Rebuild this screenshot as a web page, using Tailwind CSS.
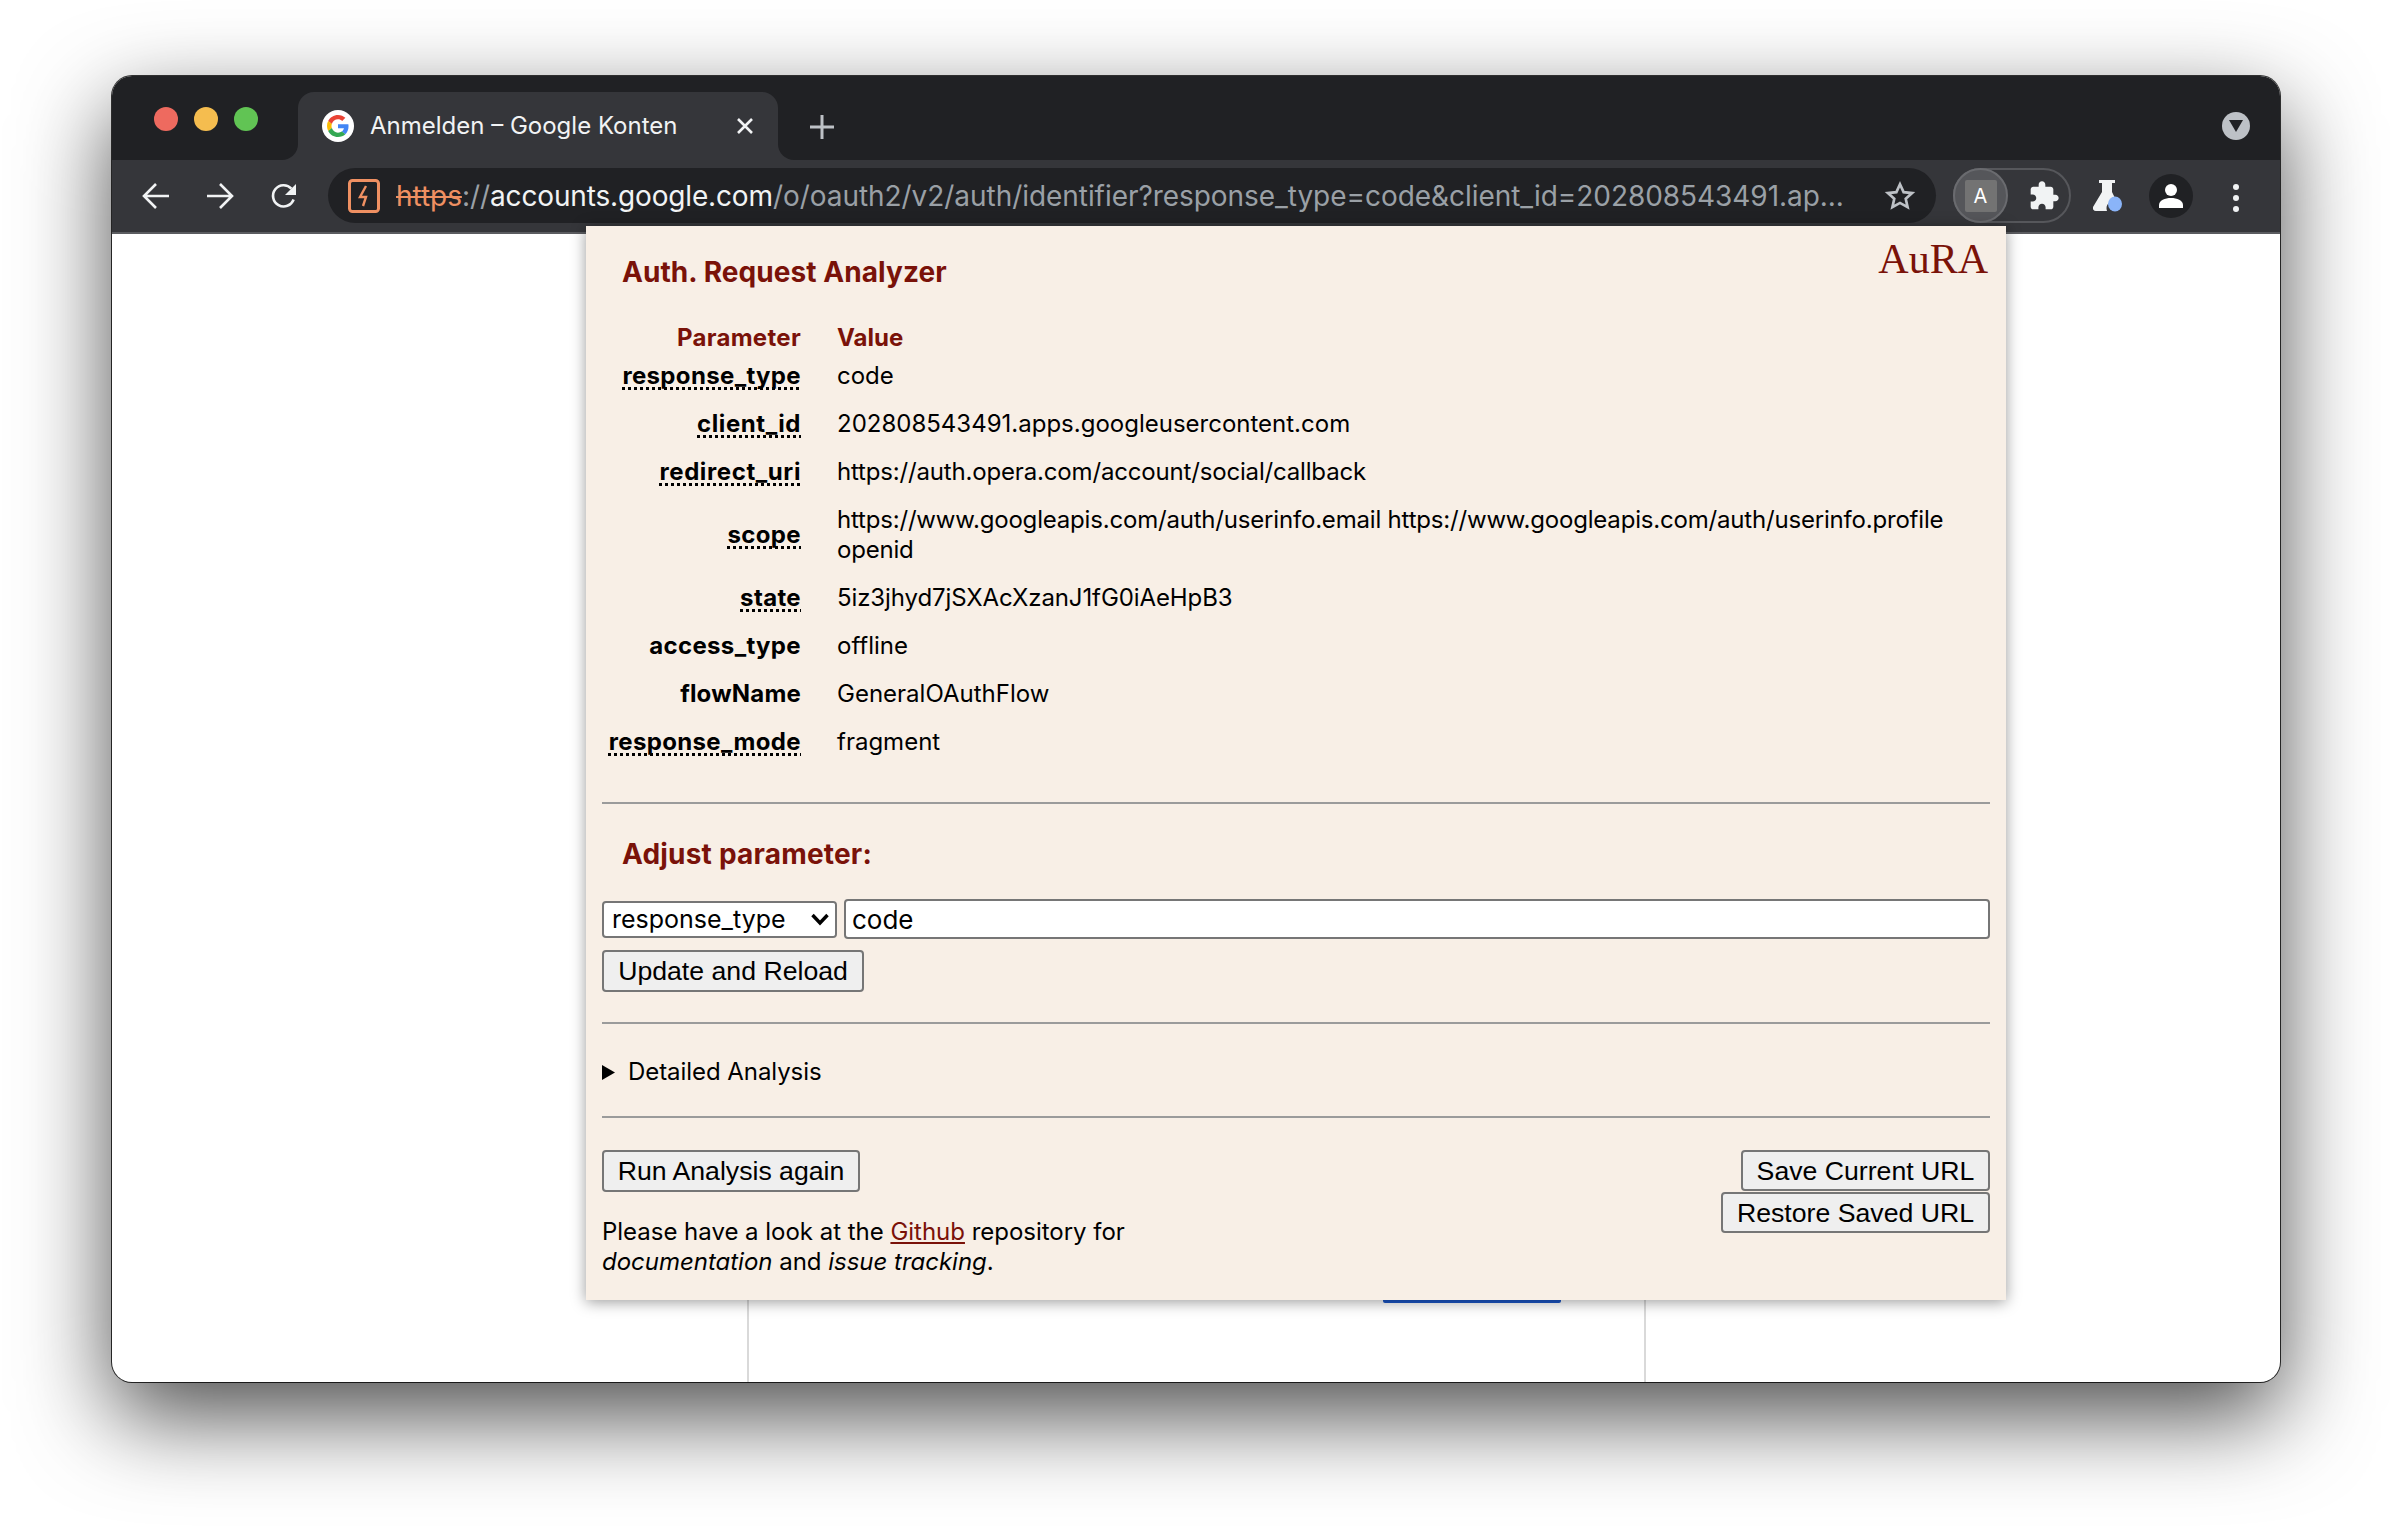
<!DOCTYPE html>
<html lang="de">
<head>
    <meta charset="UTF-8">
    <title>Anmelden – Google Konten</title>
    <script src="https://cdn.jsdelivr.net/npm/@tailwindcss/browser@4"></script>
</head>
<body class="bg-white w-[2392px] h-[1530px] overflow-hidden font-['Inter','Roboto',sans-serif]">

    <!-- Browser window -->
    <div class="relative ml-[112px] mt-[76px] w-[2168px] h-[1306px] rounded-[20px] bg-white flex flex-col shadow-[0_34px_92px_rgba(0,0,0,0.7),0_0_0_1px_rgba(20,20,20,0.85)]">

        <!-- Tab strip -->
        <div class="h-[84px] shrink-0 bg-[#202124] rounded-t-[20px] flex items-end pl-[186px] pr-[30px]">
            <div class="absolute left-[42px] top-[31px] flex gap-[16px]">
                <span class="w-[24px] h-[24px] rounded-full bg-[#ee6a5f]"></span>
                <span class="w-[24px] h-[24px] rounded-full bg-[#f5bd4f]"></span>
                <span class="w-[24px] h-[24px] rounded-full bg-[#61c454]"></span>
            </div>

            <div class="relative w-[480px] h-[68px] bg-[#35363a] rounded-t-[16px] flex items-center pl-[24px] pr-[23px]">
                <span class="absolute -left-[16px] bottom-0 w-[16px] h-[16px] bg-[#35363a]"><span class="block w-full h-full bg-[#202124] rounded-br-[16px]"></span></span>
                <span class="absolute -right-[16px] bottom-0 w-[16px] h-[16px] bg-[#35363a]"><span class="block w-full h-full bg-[#202124] rounded-bl-[16px]"></span></span>
                <span class="w-[32px] h-[32px] rounded-full bg-white flex items-center justify-center shrink-0">
                    <svg class="w-[22px] h-[22px]" viewBox="0 0 48 48">
                        <path fill="#EA4335" d="M24 9.5c3.54 0 6.71 1.22 9.21 3.6l6.85-6.85C35.9 2.38 30.47 0 24 0 14.62 0 6.51 5.38 2.56 13.22l7.98 6.19C12.43 13.72 17.74 9.5 24 9.5z"/>
                        <path fill="#4285F4" d="M46.98 24.55c0-1.57-.15-3.09-.38-4.55H24v9.02h12.94c-.58 2.96-2.26 5.48-4.78 7.18l7.73 6c4.51-4.18 7.09-10.36 7.09-17.65z"/>
                        <path fill="#FBBC05" d="M10.53 28.59c-.48-1.45-.76-2.99-.76-4.59s.27-3.14.76-4.59l-7.98-6.19C.92 16.46 0 20.12 0 24c0 3.88.92 7.54 2.56 10.78l7.97-6.19z"/>
                        <path fill="#34A853" d="M24 48c6.48 0 11.93-2.13 16.08-5.81l-7.73-6c-2.15 1.45-4.92 2.3-8.35 2.3-6.26 0-11.57-4.22-13.47-9.91l-7.98 6.19C6.51 42.62 14.62 48 24 48z"/>
                    </svg>
                </span>
                <span class="ml-[16px] text-[24px] leading-[30px] text-[#f1f3f4] whitespace-nowrap">Anmelden – Google Konten</span>
                <svg class="ml-auto w-[20px] h-[20px]" viewBox="0 0 20 20"><path d="M3 3l14 14M17 3L3 17" stroke="#f1f3f4" stroke-width="2.6"/></svg>
            </div>

            <svg class="ml-[32px] mb-[21px] w-[24px] h-[24px]" viewBox="0 0 24 24"><path d="M12 0v24M0 12h24" stroke="#bdc1c6" stroke-width="3"/></svg>

            <span class="ml-auto mb-[20px] w-[28px] h-[28px] rounded-full bg-[#bdc1c6] flex items-center justify-center">
                <svg class="w-[14px] h-[12px]" viewBox="0 0 14 12"><path d="M0 0h14L7 12z" fill="#202124"/></svg>
            </span>
        </div>

        <!-- Toolbar -->
        <div class="h-[74px] shrink-0 bg-[#35363a] border-b-[2px] border-[#5b5c60] flex items-start pt-[8px]">
            <div class="w-[216px] h-[55px] flex items-center pl-[30px] gap-[36px] shrink-0">
                <svg class="w-[28px] h-[28px]" viewBox="0 0 28 28" fill="none" stroke="#f1f3f4" stroke-width="2.6"><path d="M27 14H3M14 2L2 14l12 12"/></svg>
                <svg class="w-[28px] h-[28px]" viewBox="0 0 28 28" fill="none" stroke="#f1f3f4" stroke-width="2.6"><path d="M1 14h24M14 2l12 12-12 12"/></svg>
                <svg class="w-[28px] h-[28px]" viewBox="0 0 28 28"><path d="M23.6 17.5A10.6 10.6 0 1 1 21.4 6.6" fill="none" stroke="#f1f3f4" stroke-width="2.6"/><path d="M26 2v11H15z" fill="#f1f3f4"/></svg>
            </div>

            <div class="w-[1608px] h-[55px] bg-[#202124] rounded-full flex items-center pl-[20px] shrink-0">
                <svg class="w-[32px] h-[34px] shrink-0" viewBox="0 0 32 34" fill="none"><rect x="1.500" y="1.500" width="29" height="31" rx="3" stroke="#ef9062" stroke-width="3"/><path d="M18 7l-6 11h6l-3 9" stroke="#ef9062" stroke-width="2.400"/></svg>
                <div class="ml-[16px] w-[1450px] text-[28px] leading-[36px] whitespace-nowrap text-[#9aa0a6] tracking-[-0.05px]"><span class="text-[#ef9062] line-through">https</span>://<span class="text-[#f1f3f4] tracking-[-0.15px]">accounts.google.com</span>/o/oauth2/v2/auth/identifier?response_type=code&amp;client_id=202808543491.ap...</div>
                <svg class="ml-auto mr-[20px] w-[32px] h-[32px]" viewBox="0 0 24 24" fill="none"><path d="M12 3.200l2.700 5.900 6.400.7-4.800 4.300 1.400 6.300-5.700-3.200-5.700 3.200 1.400-6.300-4.800-4.300 6.400-.7z" stroke="#bdc1c6" stroke-width="2"/></svg>
            </div>

            <div class="relative ml-[17px] w-[118px] h-[55px] rounded-full border-[2px] border-[#56575b] flex items-center shrink-0">
                <span class="absolute -left-[2px] -top-[2px] w-[55px] h-[55px] rounded-full bg-[#55565a] border-[2px] border-[#6a6b6f] flex items-center justify-center">
                    <span class="w-[32px] h-[32px] rounded-[2px] bg-[#737373] text-white text-[20px] leading-[32px] text-center">A</span>
                </span>
                <svg class="ml-[73px] w-[32px] h-[32px]" viewBox="0 0 24 24"><path fill="#f1f3f4" d="M20.5 11H19V7c0-1.1-.9-2-2-2h-4V3.5C13 2.12 11.88 1 10.5 1S8 2.12 8 3.5V5H4c-1.1 0-1.99.9-1.99 2v3.8H3.5c1.49 0 2.7 1.21 2.7 2.7s-1.21 2.7-2.7 2.7H2V20c0 1.1.9 2 2 2h3.8v-1.5c0-1.49 1.21-2.7 2.7-2.7 1.49 0 2.7 1.21 2.7 2.7V22H17c1.1 0 2-.9 2-2v-4h1.5c1.38 0 2.5-1.12 2.5-2.5S21.88 11 20.5 11z"/></svg>
            </div>

            <svg class="ml-[22px] mt-[12px] w-[30px] h-[32px] shrink-0" viewBox="0 0 30 32"><path fill="#f1f3f4" d="M6 0h16v3h-3v9l5 10h-7a8 8 0 0 0-3 9H3a3 3 0 0 1-3-4L9 12V3H6z"/><ellipse cx="22" cy="24" rx="7" ry="7.500" fill="#8ab4f8"/></svg>

            <span class="ml-[26px] mt-[6px] w-[44px] h-[44px] rounded-full bg-[#202124] flex items-center justify-center shrink-0">
                <svg class="w-[26px] h-[26px]" viewBox="0 0 26 26"><circle cx="13" cy="7" r="6" fill="#fff"/><path d="M1 25v-3c0-4.500 6-7 12-7s12 2.500 12 7v3z" fill="#fff"/></svg>
            </span>

            <span class="ml-[40px] mt-[16px] w-[6px] flex flex-col gap-[5px] shrink-0">
                <span class="w-[6px] h-[6px] rounded-full bg-[#f1f3f4]"></span>
                <span class="w-[6px] h-[6px] rounded-full bg-[#f1f3f4]"></span>
                <span class="w-[6px] h-[6px] rounded-full bg-[#f1f3f4]"></span>
            </span>
        </div>

        <!-- Page behind the popup -->
        <div class="absolute left-[635px] top-[1224px] w-[2px] h-[82px] bg-[#d9d9d9]"></div>
        <div class="absolute left-[1532px] top-[1224px] w-[2px] h-[82px] bg-[#d9d9d9]"></div>
        <div class="absolute left-[1271px] top-[1224px] w-[178px] h-[3px] rounded-b-[2px] bg-[#1b57c8]"></div>

        <!-- Extension popup -->
        <div class="absolute left-[474px] top-[150px] w-[1420px] h-[1074px] bg-[#f8efe6] text-black pl-[16px] pr-[16px] shadow-[0_2px_14px_rgba(0,0,0,0.4)] text-[24px] leading-[30px]">
            <div class="flex justify-between items-start">
                <h1 class="ml-[20px] mt-[29px] text-[28px] leading-[34px] font-bold tracking-[0.07px] text-[#7a1209]">Auth. Request Analyzer</h1>
                <div class="mt-[11px] mr-[2px] font-['Liberation_Serif',serif] text-[42px] leading-[44px] text-[#7a1209]">AuRA</div>
            </div>

            <table class="mt-[34px] mb-[36px]">
                <thead>
                    <tr class="text-[#7a1209] font-bold">
                        <th class="w-[199px] text-right font-bold py-0 leading-[30px] tracking-[0.3px]">Parameter</th>
                        <th class="pl-[36px] text-left font-bold leading-[30px]">Value</th>
                    </tr>
                </thead>
                <tbody>
                    <tr><td class="text-right font-bold pt-[8px] pb-[9px] tracking-[0.35px]"><span class="underline decoration-dotted decoration-[3px] underline-offset-[3px] [text-decoration-skip-ink:none]">response_type</span></td><td class="pl-[36px] pt-[8px] pb-[9px]">code</td></tr>
                    <tr><td class="text-right font-bold py-[9px] tracking-[0.6px]"><span class="underline decoration-dotted decoration-[3px] underline-offset-[3px] [text-decoration-skip-ink:none]">client_id</span></td><td class="pl-[36px] py-[9px]">202808543491.apps.googleusercontent.com</td></tr>
                    <tr><td class="text-right font-bold py-[9px] tracking-[0.6px]"><span class="underline decoration-dotted decoration-[3px] underline-offset-[3px] [text-decoration-skip-ink:none]">redirect_uri</span></td><td class="pl-[36px] py-[9px] tracking-[-0.17px]">https://auth.opera.com/account/social/callback</td></tr>
                    <tr><td class="text-right font-bold py-[9px] tracking-[0.35px]"><span class="underline decoration-dotted decoration-[3px] underline-offset-[3px] [text-decoration-skip-ink:none]">scope</span></td><td class="pl-[36px] py-[9px] tracking-[-0.19px]">https://www.googleapis.com/auth/userinfo.email https://www.googleapis.com/auth/userinfo.profile<br>openid</td></tr>
                    <tr><td class="text-right font-bold py-[9px] tracking-[0.35px]"><span class="underline decoration-dotted decoration-[3px] underline-offset-[3px] [text-decoration-skip-ink:none]">state</span></td><td class="pl-[36px] py-[9px] tracking-[-0.1px]">5iz3jhyd7jSXAcXzanJ1fG0iAeHpB3</td></tr>
                    <tr><td class="text-right font-bold py-[9px] tracking-[0.35px]">access_type</td><td class="pl-[36px] py-[9px]">offline</td></tr>
                    <tr><td class="text-right font-bold py-[9px] tracking-[0.2px]">flowName</td><td class="pl-[36px] py-[9px]">GeneralOAuthFlow</td></tr>
                    <tr><td class="text-right font-bold py-[9px] tracking-[0.35px]"><span class="underline decoration-dotted decoration-[3px] underline-offset-[3px] [text-decoration-skip-ink:none]">response_mode</span></td><td class="pl-[36px] py-[9px]">fragment</td></tr>
                </tbody>
            </table>

            <div class="h-[2px] bg-[#9b9b9b]"></div>

            <h2 class="ml-[20px] mt-[33px] text-[28px] leading-[34px] font-bold tracking-[0.2px] text-[#7a1209]">Adjust parameter:</h2>

            <div class="mt-[28px] flex items-center gap-[7px]">
                <div class="relative">
                    <select class="block w-[235px] h-[37px] bg-white border-[2px] border-[#767676] rounded-[4px] pl-[4px] font-['Inter',sans-serif] text-[25px] text-black">
                        <option>response_type</option>
                    </select>
                    <span class="absolute right-[2px] top-[2px] w-[30px] h-[33px] bg-white rounded-r-[3px] flex items-center justify-center pointer-events-none">
                        <svg class="w-[18px] h-[13px]" viewBox="0 0 18 13" fill="none"><path d="M1.500 2l7.500 8 7.500-8" stroke="#000" stroke-width="3.400"/></svg>
                    </span>
                </div>
                <input class="flex-1 h-[40px] bg-white border-[2px] border-[#767676] rounded-[4px] px-[6px] font-['Inter',sans-serif] text-[26px] text-black" value="code">
            </div>
            <button class="mt-[11px] block w-[262px] h-[42px] bg-[#efefef] border-[2px] border-[#767676] rounded-[4px] font-['Liberation_Sans',sans-serif] text-[26.67px] leading-[30px] text-black">Update and Reload</button>

            <div class="mt-[30px] h-[2px] bg-[#9b9b9b]"></div>

            <div class="mt-[33px] h-[30px] flex items-center">
                <svg class="w-[13px] h-[15px]" viewBox="0 0 13 15"><path d="M0 0l13 7.500L0 15z" fill="#000"/></svg>
                <span class="ml-[13px] tracking-[-0.06px]">Detailed Analysis</span>
            </div>

            <div class="mt-[29px] h-[2px] bg-[#9b9b9b]"></div>

            <div class="mt-[32px] flex justify-between items-start">
                <div>
                    <button class="block w-[258px] h-[42px] bg-[#efefef] border-[2px] border-[#767676] rounded-[4px] font-['Liberation_Sans',sans-serif] text-[26.67px] leading-[30px] text-black">Run Analysis again</button>
                    <p class="mt-[25px] tracking-[-0.02px]">Please have a look at the <a class="text-[#7a1209] underline" href="#">Github</a> repository for<br><em>documentation</em> and <em>issue tracking</em>.</p>
                </div>
                <div class="flex flex-col items-end gap-[1px]">
                    <button class="w-[249px] h-[41px] bg-[#efefef] border-[2px] border-[#767676] rounded-[4px] font-['Liberation_Sans',sans-serif] text-[26.67px] leading-[30px] text-black">Save Current URL</button>
                    <button class="w-[269px] h-[41px] bg-[#efefef] border-[2px] border-[#767676] rounded-[4px] font-['Liberation_Sans',sans-serif] text-[26.67px] leading-[30px] text-black">Restore Saved URL</button>
                </div>
            </div>
        </div>
    </div>

</body>
</html>
